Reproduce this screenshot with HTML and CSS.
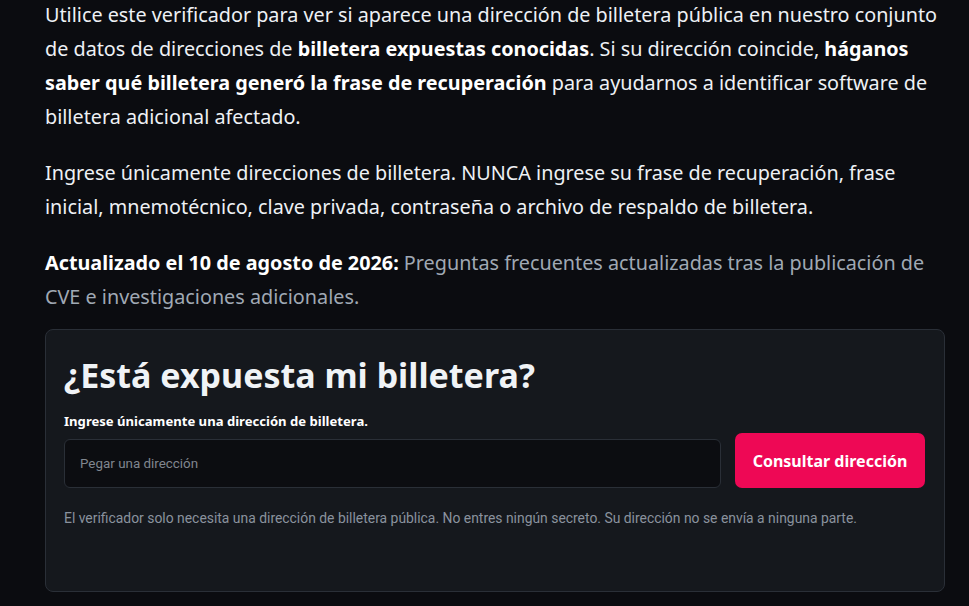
FILE: index.html
```html
<!DOCTYPE html>
<html lang="es">
<head>
<meta charset="utf-8">
<title>Verificador de billetera</title>
<link rel="stylesheet" href="styles.css">
</head>
<body>
<main class="page">
  <p class="intro">Utilice este verificador para ver si aparece una dirección de billetera pública en nuestro conjunto de datos de direcciones de <strong>billetera expuestas conocidas</strong>. Si su dirección coincide, <strong>háganos saber qué billetera generó la frase de recuperación</strong> para ayudarnos a identificar software de billetera adicional afectado.</p>
  <p class="intro">Ingrese únicamente direcciones de billetera. NUNCA ingrese su frase de recuperación, frase inicial, mnemotécnico, clave privada, contraseña o archivo de respaldo de billetera.</p>
  <p class="intro update"><strong>Actualizado el 10 de agosto de 2026:</strong> <span class="muted">Preguntas frecuentes actualizadas tras la publicación de CVE e investigaciones adicionales.</span></p>

  <section class="card">
    <h1 class="card-title">¿Está expuesta mi billetera?</h1>
    <label class="field-label" for="addr">Ingrese únicamente una dirección de billetera.</label>
    <div class="field-row">
      <input id="addr" class="field-input" type="text" placeholder="Pegar una dirección">
      <button class="field-btn" type="button">Consultar dirección</button>
    </div>
    <p class="note">El verificador solo necesita una dirección de billetera pública. No entres ningún secreto. Su dirección no se envía a ninguna parte.</p>
  </section>
</main>
</body>
</html>
```

FILE: styles.css
```css
html, body {
  margin: 0;
  padding: 0;
  background: #0b0c10;
}
body {
  font-family: "Noto Sans", "Open Sans", sans-serif;
  color: #eef1f5;
  height: 606px;
  overflow: hidden;
}
.page {
  width: 900px;
  margin-left: 45px;
}
.intro {
  font-size: 19.8px;
  line-height: 34px;
  margin: 0 0 22px 0;
}
.intro:first-child {
  margin-top: -2px;
}
.intro strong {
  font-weight: 700;
  color: #ffffff;
}
.muted {
  color: #a0a9b4;
}
.update {
  margin-bottom: 15px;
}
.card {
  background: #15181d;
  border: 1px solid #2a2f37;
  border-radius: 8px;
  padding: 20px 19px 0 18px;
  height: 241px;
}
.card-title {
  margin: 0;
  font-size: 34px;
  line-height: 50px;
  font-weight: 700;
  color: #f0f3f6;
}
.field-label {
  display: block;
  margin-top: 12px;
  font-size: 13.1px;
  font-weight: 700;
  color: #ffffff;
}
.field-row {
  display: flex;
  align-items: flex-end;
  gap: 14px;
  margin-top: 3px;
}
.field-input {
  flex: 1;
  height: 49px;
  box-sizing: border-box;
  background: #0c0d11;
  border: 1px solid #2a2f37;
  border-radius: 6px;
  padding: 0 15px;
  font-family: "Roboto", "Noto Sans", sans-serif;
  font-size: 13.4px;
  color: #e6e9ee;
  outline: none;
}
.field-input::placeholder {
  color: #80868f;
}
.field-btn {
  width: 190px;
  height: 55px;
  background: #ee0855;
  border: none;
  border-radius: 7px;
  color: #ffffff;
  font-family: "Noto Sans", "Open Sans", sans-serif;
  font-size: 16px;
  font-weight: 700;
  cursor: pointer;
}
.note {
  margin: 22px 0 0 0;
  font-family: "Roboto", sans-serif;
  font-size: 13.9px;
  color: #8a929d;
}
```
